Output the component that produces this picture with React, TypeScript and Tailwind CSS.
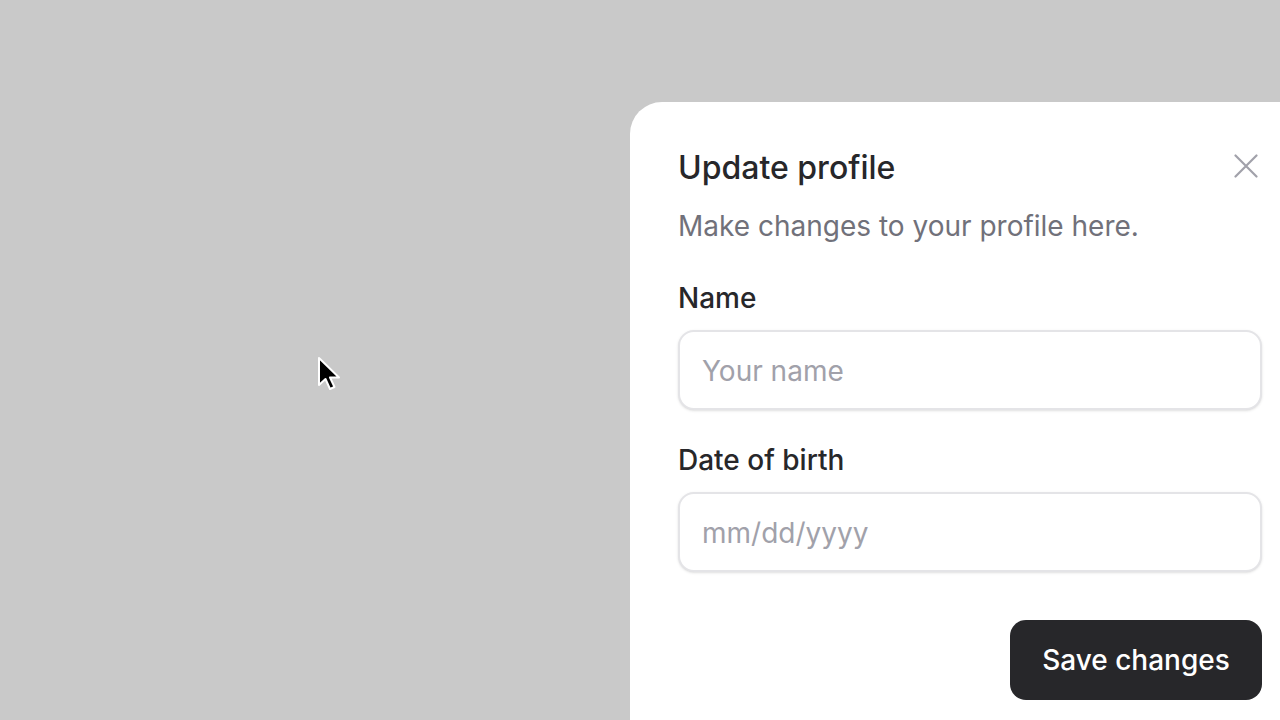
import React from "react";

const Field = ({ label, placeholder, className = "" }: { label: string; placeholder: string; className?: string }) => (
  <div className={`flex flex-col ${className}`}>
    <label className="text-[28px] font-medium leading-9 text-[#27272a]">{label}</label>
    <input
      placeholder={placeholder}
      className="mt-[14px] h-20 w-full rounded-2xl border-2 border-[#e4e4e7] bg-white pl-[22px] pr-6 pt-[2px] text-[28px] text-[#27272a] shadow-sm outline-none placeholder:text-[#a1a1aa]"
    />
  </div>
);

export default function App() {
  return (
    <div
      className="relative h-[720px] w-[1280px] overflow-hidden bg-[#c9c9c9]"
      style={{ fontFamily: "Inter, 'Noto Sans', sans-serif" }}
    >
      <div className="absolute left-[630px] top-[102px] flex h-[618px] w-[650px] flex-col rounded-tl-[32px] bg-white pl-12 pr-[18px] pt-12">
        <div className="flex items-start justify-between">
          <h2 className="text-[32px] font-medium leading-9 text-[#27272a]">Update profile</h2>
          <button className="mr-[4px] mt-[4px] text-[#a1a1aa]" aria-label="Close">
            <svg width="24" height="24" viewBox="0 0 24 24" fill="none" stroke="currentColor" strokeWidth="2.2" strokeLinecap="round">
              <path d="M1.5 1.5L22.5 22.5M22.5 1.5L1.5 22.5" />
            </svg>
          </button>
        </div>
        <p className="mt-[22px] text-[28px] leading-9 text-[#71717a]">Make changes to your profile here.</p>
        <Field label="Name" placeholder="Your name" className="mt-9" />
        <Field label="Date of birth" placeholder="mm/dd/yyyy" className="mt-8" />
        <div className="mt-12 flex justify-end">
          <button className="h-20 w-[252px] rounded-2xl bg-[#27272a] text-[28px] font-medium text-white">
            Save changes
          </button>
        </div>
      </div>

      <svg className="absolute left-[316px] top-[355px]" width="28" height="40" viewBox="0 0 28 40">
        <path
          d="M3 3 L3 30 L9.5 24 L14 34 L18.5 32 L14 22.5 L23 22.5 Z"
          fill="#000"
          stroke="#fff"
          strokeWidth="2"
          strokeLinejoin="round"
        />
      </svg>
    </div>
  );
}
